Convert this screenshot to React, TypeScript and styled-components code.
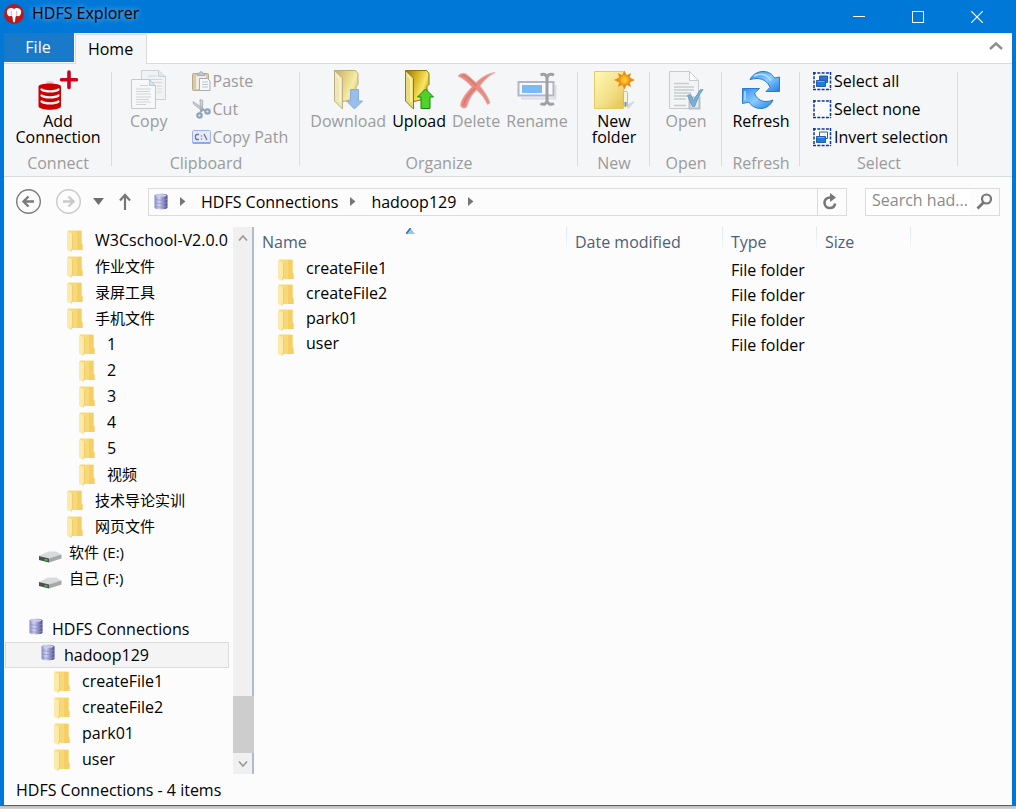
import React from "react";
import styled, { createGlobalStyle } from "styled-components";

const GlobalStyle = createGlobalStyle`
  *, *::before, *::after { box-sizing: border-box; }
  html, body { margin: 0; padding: 0; }
  body, button, input, table {
    font-family: "Open Sans", "Noto Sans CJK SC", sans-serif;
    font-size: 16px;
    line-height: 20px;
    color: #000;
  }
  button { background: none; border: 0; padding: 0; margin: 0; cursor: pointer; }
  button:disabled { cursor: default; }
  svg { display: block; flex: none; }
`;

const line = "#dadbdc";
const muted = "#9b9b9b";

const Desktop = styled.div`
  min-height: 100vh;
  display: flex;
  flex-direction: column;
  padding-bottom: 3px;
  background: linear-gradient(to top, #d4d4d4, #bcbcbc 3px, #bcbcbc);
`;

const Window = styled.div`
  flex: 1;
  display: flex;
  flex-direction: column;
  background: #fcfcfc;
  border: solid #0078d7;
  border-width: 0 4px 1px 4px;
`;

const TitleBar = styled.header`
  height: 33px;
  display: flex;
  align-items: center;
  gap: 8px;
  padding-bottom: 5px;
  background: #0078d7;
`;

const Title = styled.h1`
  flex: 1;
  margin: 0;
  padding-bottom: 2px;
  font-size: 16px;
  line-height: 20px;
  font-weight: 400;
  text-shadow: 0 0 6px #62aae8, 0 0 6px #62aae8;
`;

const WindowButtons = styled.div`
  display: flex;
  padding: 5px 6px 0 0;
`;

const WindowButton = styled.button`
  width: 59px;
  height: 28px;
  display: grid;
  place-items: center;
`;

const TabRow = styled.nav`
  height: 31px;
  display: flex;
  background: #fff;
  border-bottom: 1px solid ${line};
`;

const FileTab = styled.button`
  width: 70px;
  height: 29px;
  padding: 0 2px 2px 0;
  background: #1979ca;
  color: #fff;
`;

const HomeTab = styled.button`
  width: 72px;
  height: 30px;
  margin: 1px 0 0 1px;
  padding: 0 1px 2px 0;
  background: #f5f6f7;
  border: 1px solid ${line};
  border-bottom: 0;
`;

const CollapseButton = styled.button`
  margin-left: auto;
  padding: 0 9px 4px;
`;

const Ribbon = styled.section`
  height: 113px;
  display: flex;
  background: #f5f6f7;
  border-bottom: 1px solid ${line};
`;

const Group = styled.div<{ $width: number }>`
  width: ${(p) => p.$width}px;
  padding: 6px 0 0 1px;
`;

const GroupBody = styled.div<{ $start?: number }>`
  height: 83px;
  display: flex;
  align-items: flex-start;
  gap: 6px;
  justify-content: ${(p) => (p.$start ? "flex-start" : "center")};
  padding-left: ${(p) => p.$start ?? 0}px;
`;

const GroupLabel = styled.div`
  text-align: center;
  color: ${muted};
  line-height: 20px;
`;

const Separator = styled.div`
  width: 1px;
  margin: 8px 0 10px;
  background: ${line};
`;

const BigButton = styled.button`
  display: flex;
  flex-direction: column;
  align-items: center;
  gap: 3px;
  line-height: 16px;
  white-space: pre-line;
  &:disabled { color: ${muted}; }
`;

const SmallList = styled.div<{ $gap?: number }>`
  display: flex;
  flex-direction: column;
  gap: 8px;
  padding-top: 1px;
  margin-left: ${(p) => p.$gap ?? 0}px;
`;

const SmallButton = styled.button`
  display: flex;
  align-items: center;
  gap: 2px;
  white-space: nowrap;
  &:disabled { color: ${muted}; }
`;

const NavRow = styled.div`
  height: 49px;
  display: flex;
  align-items: center;
  padding: 0 12px 0 11px;
`;

const NavButton = styled.button<{ $width: number }>`
  width: ${(p) => p.$width}px;
  height: 27px;
  display: flex;
  align-items: center;
`;

const AddressBar = styled.div`
  flex: 1;
  height: 28px;
  display: flex;
  align-items: center;
  border: 1px solid ${line};
  padding-left: 5px;
`;

const Crumb = styled.a`
  color: #000;
  text-decoration: none;
  padding: 0 12px 0 15px;
`;

const ReloadButton = styled.button`
  width: 29px;
  height: 26px;
  margin-left: auto;
  padding-right: 4px;
  display: grid;
  place-items: center;
  border-left: 1px solid ${line};
`;

const SearchBox = styled.form`
  width: 135px;
  height: 28px;
  margin-left: 18px;
  display: flex;
  border: 1px solid ${line};
`;

const SearchInput = styled.input`
  flex: 1;
  min-width: 0;
  border: 0;
  outline: 0;
  padding: 0 0 4px 6px;
  background: #fff;
  &::placeholder { color: #8a8a8a; opacity: 1; }
`;

const SearchButton = styled.button`
  width: 29px;
  display: grid;
  place-items: center;
`;

const Main = styled.main`
  flex: 1;
  display: flex;
`;

const Sidebar = styled.aside`
  width: 250px;
  display: flex;
`;

const Tree = styled.ul`
  flex: 1;
  min-width: 0;
  margin: 0;
  padding: 1px 4px 0 1px;
  list-style: none;
`;

const TreeItem = styled.li<{ $spacer?: boolean }>`
  height: ${(p) => (p.$spacer ? 25 : 26)}px;
`;

const TreeLink = styled.a<{ $indent: number; $gap: number; $selected?: boolean }>`
  height: 26px;
  display: flex;
  align-items: center;
  gap: ${(p) => p.$gap}px;
  padding-left: ${(p) => p.$indent}px;
  color: #000;
  text-decoration: none;
  white-space: nowrap;
  background: ${(p) => (p.$selected ? "#f4f4f4" : "none")};
  box-shadow: ${(p) => (p.$selected ? `inset 0 0 0 1px ${line}` : "none")};
`;

const TreeIcon = styled.span<{ $kind: IconKind }>`
  padding-top: ${(p) => ({ folder: 2, drive: 8, db: 0 })[p.$kind]}px;
  padding-bottom: ${(p) => (p.$kind === "db" ? 5 : 0)}px;
`;

const TreeText = styled.span<{ $cjk: boolean }>`
  font-size: ${(p) => (p.$cjk ? 15 : 16)}px;
`;

const ScrollBar = styled.div`
  width: 21px;
  margin-top: 1px;
  display: flex;
  flex-direction: column;
  background: #f0f0f0;
  border-right: 2px solid #a9bdd3;
`;

const ScrollButton = styled.button`
  height: 21px;
  display: grid;
  place-items: center;
`;

const ScrollTrack = styled.div`
  flex: 1;
  display: flex;
  flex-direction: column;
  justify-content: flex-end;
`;

const ScrollThumb = styled.div`
  height: 57px;
  margin-right: -2px;
  background: #cdcdcd;
`;

const Listing = styled.section`
  flex: 1;
  min-width: 0;
`;

const FileTable = styled.table`
  width: 100%;
  table-layout: fixed;
  border-collapse: collapse;
`;

const Col = styled.col<{ $width?: number }>`
  width: ${(p) => (p.$width ? `${p.$width}px` : "auto")};
`;

const HeadCell = styled.th`
  height: 30px;
  padding: 2px 0 0 8px;
  text-align: left;
  font-weight: 400;
  color: #4c607a;
  background: linear-gradient(#d9e6f5, #fcfcfc) right 1px / 1px 26px no-repeat;
  &:last-child { background: none; }
`;

const SortHead = styled.div`
  display: flex;
  align-items: flex-start;
  gap: 99px;
`;

const SortMark = styled.span`
  height: 20px;
  margin-top: -4px;
`;

const Row = styled.tr`
  height: 25px;
`;

const NameCell = styled.td`
  padding: 0 0 0 24px;
`;

const NameLink = styled.a`
  display: flex;
  align-items: center;
  gap: 12px;
  height: 25px;
  padding-bottom: 1px;
  color: #000;
  text-decoration: none;
`;

const NameIcon = styled.span`
  padding-top: 4px;
`;

const Cell = styled.td`
  padding: 2px 0 0 8px;
`;

const StatusBar = styled.footer`
  height: 31px;
  display: flex;
  align-items: center;
  padding: 1px 12px 0;
`;

/* ---------- Icons ---------- */

const LogoIcon = () => (
  <svg width="20" height="20" viewBox="0 0 20 20">
    <circle cx="10" cy="10" r="10" fill="#b81a20" />
    <path d="M8.600 4.200C7 3.400 4.300 4.200 3.200 6.300c-.8 2 0 4.700 1.500 5.700 1 .6 2 .1 2.600-.4L8.500 13l.5 4.500 1 1V5z" fill="#fff" />
    <path d="M11.400 4.200c1.600-.8 4.300 0 5.400 2.100.8 2 0 4.700-1.500 5.700-1 .6-2 .1-2.600-.4L11.500 13l-.5 4.500-1 1V5z" fill="#fff" />
    <path d="M7.300 7v4M12.700 7v4" stroke="#e4abae" fill="none" />
  </svg>
);

const AddConnectionIcon = () => (
  <svg width="42" height="40" viewBox="0 0 42 40">
    <ellipse cx="13" cy="12.500" rx="4" ry="1.500" fill="#ecc" />
    <path d="M1.500 16.500C1.500 12.500 24 12.500 24 16.500v19.500c0 5-22.500 5-22.500 0z" fill="#c00" />
    <path d="M4.500 19.500c3.500 2.500 13.500 2.500 17 0M4.500 25.500c3.500 2.500 13.500 2.500 17 0M4.500 31.500c3.500 2.500 13.500 2.500 17 0" stroke="#f5f6f7" strokeWidth="2.200" fill="none" strokeLinecap="round" />
    <path d="M32 2v15.500M24.500 9.700h15" stroke="#d0021b" strokeWidth="3.600" strokeLinecap="round" />
  </svg>
);

const CopyIcon = () => (
  <svg width="36" height="40" viewBox="0 0 36 40">
    <path d="M10.500.5h17l7 6v23h-24z" fill="#f0f3f6" stroke="#ccd1d6" />
    <path d="M27.500.5v6h7" fill="#dbe7f2" stroke="#ccd1d6" />
    <path d="M17 6h9M14 9.500h17M14 12.500h17M26 16h5M26 19h5M26 22h5" stroke="#d3d7da" />
    <path d="M.5 9.500h18l6 6v23H.5z" fill="#f6f8fa" stroke="#c4c9ce" />
    <path d="M18.500 9.500v6h6z" fill="#d6e4f0" stroke="#c4c9ce" />
    <path d="M9 15.500h8M5 19h15M5 21.500h14M5 24h15M5 27h15M5 29.500h13M5 32h15M5 34.500h10" stroke="#d0d2d4" />
  </svg>
);

const PasteIcon = () => (
  <svg width="19" height="20" viewBox="0 0 19 20">
    <rect x=".5" y="2.500" width="16" height="17" rx="1" fill="#dac9a7" stroke="#b9aa8e" />
    <path d="M4 4h10v14H4z" fill="#f0ece4" />
    <path d="M5 4.500V2.500h2C7 .2 11 .2 11 2.500h2v2z" fill="#c1c6cc" stroke="#9fa5ab" strokeWidth=".8" />
    <path d="M7.500 7.500h8l2.500 2.500v9.500H7.500z" fill="#f4f8fb" stroke="#a5adb6" />
    <path d="M10 11h6M10 13.500h6M10 16h6" stroke="#bcc6cf" />
  </svg>
);

const CutIcon = () => (
  <svg width="19" height="20" viewBox="0 0 19 20">
    <path d="M8 .5l2.800 1-.3 9-2 2.200zM1 2.500l11.500 8-2 1.700L1.500 5z" fill="#c8cdd2" stroke="#a5abb1" strokeWidth=".8" />
    <circle cx="7.500" cy="16.500" r="2.200" fill="#e6ebf0" stroke="#8ca5be" strokeWidth="2.200" />
    <circle cx="15.500" cy="12.500" r="2.200" fill="#e6ebf0" stroke="#8ca5be" strokeWidth="2.200" />
    <path d="M8 14l2-3.500 3.500 1" stroke="#99a9b8" strokeWidth="2" fill="none" />
  </svg>
);

const CopyPathIcon = () => (
  <svg width="19" height="16" viewBox="0 0 19 16">
    <rect x=".5" y="1.500" width="18" height="13" rx="1" fill="#e4eafd" stroke="#9fb1f5" />
    <path d="M1 14h17" stroke="#8fa4f2" strokeWidth="2" />
    <path d="M7 5.500H4.500L3.500 6.500v3l1 1H7M9.500 6.500v1M9.500 9.500v1M12 5l3 6" stroke="#72757e" strokeWidth="1.300" fill="none" />
  </svg>
);

const FolderArrowIcon = ({ down }: { down?: boolean }) => {
  const id = down ? "folder-down" : "folder-up";
  return (
    <svg width="30" height="40" viewBox="0 0 30 40" opacity={down ? 0.55 : 1}>
      <defs>
        <linearGradient id={id} x1="0" y1="0" x2="1" y2=".5">
          <stop offset="0" stopColor="#8f7610" />
          <stop offset=".45" stopColor="#d6b421" />
          <stop offset=".8" stopColor="#f7e668" />
          <stop offset="1" stopColor="#d3b01c" />
        </linearGradient>
      </defs>
      <path d="M1.500.5h21l2.500 3v11l-2 2v12l-13 3z" fill={`url(#${id})`} stroke="#8d7408" />
      <path d="M1.500.5l8 7.500v31l-8-8z" fill="#eadb7c" stroke="#8d7a24" />
      <path d="M3.500 5l3.500 4v23" stroke="#fbf3b0" strokeWidth="1.500" fill="none" />
      {down ? (
        <path d="M17.500 19.500h8v11.500h4L21.500 39l-8-8h4z" fill="#4f8fe6" stroke="#3470c4" />
      ) : (
        <path d="M21.500 19L29.500 27h-3.500v11.500h-9V27h-3.500z" fill="#4fd32b" stroke="#18860f" />
      )}
    </svg>
  );
};

const DeleteIcon = () => (
  <svg width="39" height="40" viewBox="0 0 39 40">
    <path d="M1 6C4 2.500 8 2.500 11 5.500L19 12.500C24 8 30 3.500 38 2.500 31.500 6 26.500 10.500 23 16c4.500 5.500 8.500 11.500 10 17l-2.500 1.500C28 29 24 23.500 19.500 20 14.500 25 11.500 30 10 36.500 8 39 4 38.500 3.500 35c1-6.500 6-12.500 11.500-18C10 11.500 6 8.500 1 6z" fill="#e58c84" stroke="#efb2ac" />
    <path d="M5 5c5 1 10 6 14.500 11M6.500 35c2-7 7-13 12-17" stroke="#d9776e" strokeWidth="1.500" fill="none" />
  </svg>
);

const RenameIcon = () => (
  <svg width="40" height="40" viewBox="0 0 40 40">
    <path d="M4 28.500h35M38.500 15v13" stroke="#dcdde0" strokeWidth="2" />
    <rect x="1.500" y="12" width="35" height="13.500" fill="#f7f9fc" stroke="#b1b4cd" strokeWidth="2" />
    <rect x="5" y="15" width="20" height="8" fill="#7abaf7" />
    <path d="M23.500 5c4-2 6 0 6.500 3 .5-3 3-5 7-3M23.500 33.500c4 2 6 0 6.500-3 .5 3 3 5 7 3M30 8v23" stroke="#a0a0a0" strokeWidth="3" fill="none" />
  </svg>
);

const NewFolderIcon = () => (
  <svg width="42" height="40" viewBox="0 0 42 40">
    <defs>
      <linearGradient id="new-folder" x1="0" x2="1" y1="0" y2="1">
        <stop offset="0" stopColor="#fffab5" />
        <stop offset=".6" stopColor="#f2df86" />
        <stop offset="1" stopColor="#e3c24f" />
      </linearGradient>
      <radialGradient id="sun">
        <stop offset="0" stopColor="#ffd84a" />
        <stop offset="1" stopColor="#f59a0c" />
      </radialGradient>
    </defs>
    <path d="M34 38.500h2l5-6v-1.500l-6 3z" fill="#d8dade" />
    <path d="M1.500 1.500h29v37h-29z" fill="url(#new-folder)" stroke="#e4ca65" />
    <rect x="30.500" y="21.500" width="4" height="15" rx="1" fill="#f8f4d5" stroke="#d6bb55" />
    <path d="M32.500 32v4" stroke="#5d94cf" strokeWidth="2" />
    <path d="M31.500.5l2.200 4.800 4.300-2.300-1.200 4.600 5.200 2.400-5.200 2.400 1.200 4.600-4.300-2.300-2.200 4.800-2.200-4.800L25 17l1.200-4.600L21 10l5.200-2.400L25 3l4.300 2.300z" fill="#ee8c0d" />
    <circle cx="31.500" cy="10" r="5" fill="url(#sun)" />
  </svg>
);

const OpenIcon = () => (
  <svg width="36" height="40" viewBox="0 0 36 40">
    <path d="M1.500 1.500h20l9 9v28h-29z" fill="#f3f4f5" stroke="#c8cacc" />
    <path d="M21.500 1.500v9h9z" fill="#fff" stroke="#c8cacc" />
    <path d="M6 13.500h15M6 17h20M6 20h20M6 23h17M6 26h14M6 29h12M6 35.500h12" stroke="#c9cbcd" strokeWidth="1.300" />
    <path d="M21.500 27.500h10v11h-10z" fill="#e7ebee" stroke="#b7bfc5" strokeWidth="2" />
    <path d="M19.500 25.500l3-1 3 6L32 20l3-.5c-4 5-6 11-8.500 17h-2z" fill="#7eaed6" stroke="#689dc7" />
  </svg>
);

const RefreshIcon = () => (
  <svg width="40" height="40" viewBox="0 0 40 40">
    <defs>
      <linearGradient id="refresh" x1="0" x2="1" y1="0" y2="1">
        <stop offset="0" stopColor="#2f8cee" />
        <stop offset=".5" stopColor="#8accfd" />
        <stop offset="1" stopColor="#1f7fe6" />
      </linearGradient>
    </defs>
    <path d="M9 9.500C12 4 17 1.500 22 1.500c6 0 9.500 3 11.500 6.500L38.500 7v14.500H25l4-4C27 12 22 8.500 16 8.500c-2.500 0-5 .5-7 1z" fill="url(#refresh)" stroke="#2b78cf" />
    <path d="M32 30C29.500 35.500 25 38.500 20 38.500c-6 0-10-3-12-6.500L1.500 33.500V18.500h17L13.500 23c2 5.500 6 8.500 11.500 8.500 2.500 0 5-.5 7-1.500z" fill="url(#refresh)" stroke="#2b78cf" />
    <path d="M13 6c6-3.500 13-2 17 4.500M4 21v9" stroke="#b9e0ff" strokeWidth="1.500" fill="none" />
  </svg>
);

const SelectIcon = ({ kind }: { kind: "all" | "none" | "invert" }) => (
  <svg width="19" height="19" viewBox="0 0 19 19">
    <rect x="1" y="1" width="16.500" height="16.500" fill="#fafbfd" />
    <path d="M0 1h18M0 17.500h18" stroke="#0b3797" strokeWidth="1.500" strokeDasharray="3 1.300" />
    <path d="M1 0v18M17.500 0v18" stroke="#0b3797" strokeWidth="1.500" strokeDasharray="3 1.300" />
    {kind !== "none" && (
      <>
        <path d="M6.500 4h8v6.500h-8z" fill={kind === "all" ? "#2375cf" : "#fff"} stroke="#2a5ba8" />
        <path d="M3.500 8.500h9v6h-9z" fill="#1380e4" stroke="#2a5ba8" />
        <path d="M4.500 9.500h7" stroke="#5fb0f5" />
      </>
    )}
  </svg>
);

const ArrowCircle = ({ back }: { back?: boolean }) => {
  const color = back ? "#7b7b7b" : "#c9c9c9";
  return (
    <svg width="26" height="26" viewBox="0 0 26 26">
      <circle cx="13.500" cy="12.500" r="11.800" fill="none" stroke={color} strokeWidth="1.400" />
      <path d={back ? "M19 12.500H9M13.500 7.500l-5 5 5 5" : "M8 12.500h10M13.500 7.500l5 5-5 5"} fill="none" stroke={color} strokeWidth="2.400" />
    </svg>
  );
};

const DatabaseIcon = () => (
  <svg width="14" height="17" viewBox="0 0 14 17">
    <defs>
      <linearGradient id="db" x1="0" x2="1">
        <stop offset="0" stopColor="#8588c6" />
        <stop offset=".35" stopColor="#d4d6f3" />
        <stop offset="1" stopColor="#45468b" />
      </linearGradient>
    </defs>
    <path d="M.5 2.500C.5 0 13.500 0 13.500 2.500v12c0 2.500-13 2.500-13 0z" fill="url(#db)" />
    <ellipse cx="7" cy="2.500" rx="5.500" ry="1.300" fill="#c9cbea" />
    <path d="M1 6c2 1.500 10 1.500 12 0M1 9.500c2 1.500 10 1.500 12 0M1 13c2 1.500 10 1.500 12 0" stroke="#8e90cb" strokeWidth=".8" fill="none" />
  </svg>
);

const FolderIcon = () => (
  <svg width="16" height="22" viewBox="0 0 16 22">
    <path d="M1 .5h13.500v13l1 1v5.500H1z" fill="#f8d978" />
    <path d="M10 1h4.500v12.500l1 1V20H10z" fill="#f5cf66" />
    <path d="M0 1l3.500 1.500L5.500 4v14L4 21.500 0 20z" fill="#fde9a8" />
    <path d="M5.500 4v14L4 21.500" stroke="#efc964" strokeWidth=".8" fill="none" />
  </svg>
);

const DriveIcon = () => (
  <svg width="24" height="14" viewBox="0 0 24 14">
    <path d="M1 7L10 2.500h8.500L23.500 6l-12.500 4z" fill="#d9dadb" />
    <path d="M1 7l10 2.500v4L1 11z" fill="#4c4f50" />
    <path d="M11 9.500l12.500-4V9.500l-12.500 4z" fill="#a5a7a9" />
    <path d="M6.500 10.500l3 .8" stroke="#35d04a" strokeWidth="1.500" />
  </svg>
);

const CrumbArrow = () => (
  <svg width="6" height="9" viewBox="0 0 6 9"><path d="M0 0l5.500 4.500L0 9z" fill="#777" /></svg>
);

const Chevron = ({ up }: { up?: boolean }) => (
  <svg width="10" height="10" viewBox="0 0 10 10">
    <path d={up ? "M1 7.500L5 3l4 4.500" : "M1 2.500L5 7l4-4.500"} fill="none" stroke="#9a9a9a" strokeWidth="1.600" />
  </svg>
);

/* ---------- Data ---------- */

type IconKind = "folder" | "drive" | "db";

type Node = { label: string; icon: IconKind; indent: number; gap: number; selected?: boolean };

const folder = (label: string, indent: number): Node => ({ label, icon: "folder", indent, gap: 12 });

const tree: (Node | null)[] = [
  folder("W3Cschool-V2.0.0", 62),
  folder("作业文件", 62),
  folder("录屏工具", 62),
  folder("手机文件", 62),
  ...["1", "2", "3", "4", "5", "视频"].map((n) => folder(n, 74)),
  folder("技术导论实训", 62),
  folder("网页文件", 62),
  { label: "软件 (E:)", icon: "drive", indent: 33, gap: 7 },
  { label: "自己 (F:)", icon: "drive", indent: 33, gap: 7 },
  null,
  { label: "HDFS Connections", icon: "db", indent: 24, gap: 9 },
  { label: "hadoop129", icon: "db", indent: 36, gap: 9, selected: true },
  ...["createFile1", "createFile2", "park01", "user"].map((n) => folder(n, 49)),
];

const treeIcons = { folder: <FolderIcon />, drive: <DriveIcon />, db: <DatabaseIcon /> };

const isCjk = (text: string) => /[\u4e00-\u9fff]/.test(text);

const files = ["createFile1", "createFile2", "park01", "user"];

export default function App() {
  return (
    <>
      <GlobalStyle />
      <Desktop>
        <Window>
          <TitleBar>
            <LogoIcon />
            <Title>HDFS Explorer</Title>
            <WindowButtons>
              <WindowButton aria-label="Minimize">
                <svg width="12" height="12"><path d="M0 5.500h12" stroke="#fff" /></svg>
              </WindowButton>
              <WindowButton aria-label="Maximize">
                <svg width="12" height="12"><rect x=".5" y=".5" width="11" height="11" fill="none" stroke="#fff" /></svg>
              </WindowButton>
              <WindowButton aria-label="Close">
                <svg width="12" height="12"><path d="M0 0l12 12M12 0L0 12" stroke="#fff" strokeWidth="1.200" /></svg>
              </WindowButton>
            </WindowButtons>
          </TitleBar>

          <TabRow>
            <FileTab>File</FileTab>
            <HomeTab>Home</HomeTab>
            <CollapseButton aria-label="Collapse ribbon">
              <svg width="14" height="10" viewBox="0 0 14 10"><path d="M1 8l6-5.500L13 8" fill="none" stroke="#8f8f8f" strokeWidth="2.400" /></svg>
            </CollapseButton>
          </TabRow>

          <Ribbon>
            <Group $width={107}>
              <GroupBody><BigButton><AddConnectionIcon />{"Add\nConnection"}</BigButton></GroupBody>
              <GroupLabel>Connect</GroupLabel>
            </Group>
            <Separator />
            <Group $width={187}>
              <GroupBody $start={17}>
                <BigButton disabled><CopyIcon />Copy</BigButton>
                <SmallList $gap={18}>
                  <SmallButton disabled><PasteIcon />Paste</SmallButton>
                  <SmallButton disabled><CutIcon />Cut</SmallButton>
                  <SmallButton disabled><CopyPathIcon />Copy Path</SmallButton>
                </SmallList>
              </GroupBody>
              <GroupLabel>Clipboard</GroupLabel>
            </Group>
            <Separator />
            <Group $width={277}>
              <GroupBody>
                <BigButton disabled><FolderArrowIcon down />Download</BigButton>
                <BigButton><FolderArrowIcon />Upload</BigButton>
                <BigButton disabled><DeleteIcon />Delete</BigButton>
                <BigButton disabled><RenameIcon />Rename</BigButton>
              </GroupBody>
              <GroupLabel>Organize</GroupLabel>
            </Group>
            <Separator />
            <Group $width={71}>
              <GroupBody><BigButton><NewFolderIcon />{"New\nfolder"}</BigButton></GroupBody>
              <GroupLabel>New</GroupLabel>
            </Group>
            <Separator />
            <Group $width={71}>
              <GroupBody><BigButton disabled><OpenIcon />Open</BigButton></GroupBody>
              <GroupLabel>Open</GroupLabel>
            </Group>
            <Separator />
            <Group $width={77}>
              <GroupBody><BigButton><RefreshIcon />Refresh</BigButton></GroupBody>
              <GroupLabel>Refresh</GroupLabel>
            </Group>
            <Separator />
            <Group $width={157}>
              <GroupBody $start={12}>
                <SmallList>
                  <SmallButton><SelectIcon kind="all" />Select all</SmallButton>
                  <SmallButton><SelectIcon kind="none" />Select none</SmallButton>
                  <SmallButton><SelectIcon kind="invert" />Invert selection</SmallButton>
                </SmallList>
              </GroupBody>
              <GroupLabel>Select</GroupLabel>
            </Group>
            <Separator />
          </Ribbon>

          <NavRow>
            <NavButton $width={40} aria-label="Back"><ArrowCircle back /></NavButton>
            <NavButton $width={38} aria-label="Forward" disabled><ArrowCircle /></NavButton>
            <NavButton $width={26} aria-label="Recent locations">
              <svg width="11" height="7"><path d="M0 0h11L5.500 7z" fill="#6f6f6f" /></svg>
            </NavButton>
            <NavButton $width={29} aria-label="Up">
              <svg width="12" height="17" viewBox="0 0 12 17"><path d="M6 17V2M1 7.500L6 2l5 5.500" fill="none" stroke="#777" strokeWidth="2.200" /></svg>
            </NavButton>
            <AddressBar>
              <NavButton $width={26} aria-label="Root"><DatabaseIcon /></NavButton>
              <CrumbArrow />
              <Crumb href="#connections">HDFS Connections</Crumb>
              <CrumbArrow />
              <Crumb href="#hadoop129">hadoop129</Crumb>
              <CrumbArrow />
              <ReloadButton aria-label="Reload">
                <svg width="14" height="17" viewBox="0 0 14 17">
                  <path d="M8 4.500C4 4 1.500 6.500 1.500 9.700c0 3 2.400 5.300 5.300 5.300 2.700 0 4.900-1.800 5.300-4.500" fill="none" stroke="#777" strokeWidth="2.600" />
                  <path d="M7 0l6 4.500L7 9z" fill="#777" />
                </svg>
              </ReloadButton>
            </AddressBar>
            <SearchBox onSubmit={(e) => e.preventDefault()}>
              <SearchInput aria-label="Search hadoop129" placeholder="Search had..." />
              <SearchButton aria-label="Search">
                <svg width="17" height="17" viewBox="0 0 17 17">
                  <circle cx="10.500" cy="6" r="4.500" fill="none" stroke="#777" strokeWidth="2.200" />
                  <path d="M7.500 9.500l-6 6" stroke="#777" strokeWidth="2.800" />
                </svg>
              </SearchButton>
            </SearchBox>
          </NavRow>

          <Main>
            <Sidebar>
              <Tree>
                {tree.map((n, i) => (
                  <TreeItem key={i} $spacer={!n} aria-hidden={n ? undefined : true}>
                    {n && (
                      <TreeLink href="#open" $indent={n.indent} $gap={n.gap} $selected={n.selected}>
                        <TreeIcon $kind={n.icon}>{treeIcons[n.icon]}</TreeIcon>
                        <TreeText $cjk={isCjk(n.label)}>{n.label}</TreeText>
                      </TreeLink>
                    )}
                  </TreeItem>
                ))}
              </Tree>
              <ScrollBar>
                <ScrollButton aria-label="Scroll up"><Chevron up /></ScrollButton>
                <ScrollTrack><ScrollThumb /></ScrollTrack>
                <ScrollButton aria-label="Scroll down"><Chevron /></ScrollButton>
              </ScrollBar>
            </Sidebar>
            <Listing>
              <FileTable>
                <colgroup>
                  <Col $width={313} />
                  <Col $width={156} />
                  <Col $width={94} />
                  <Col $width={94} />
                  <Col />
                </colgroup>
                <thead>
                  <tr>
                    <HeadCell scope="col">
                      <SortHead>
                        Name
                        <SortMark><svg width="9" height="6"><path d="M0 6l4.500-6L9 6z" fill="#8cc8f0" /><path d="M0 6l4.500-6" stroke="#3c6f94" strokeWidth="1.500" /></svg></SortMark>
                      </SortHead>
                    </HeadCell>
                    <HeadCell scope="col">Date modified</HeadCell>
                    <HeadCell scope="col">Type</HeadCell>
                    <HeadCell scope="col">Size</HeadCell>
                    <HeadCell as="td" />
                  </tr>
                </thead>
                <tbody>
                  {files.map((f) => (
                    <Row key={f}>
                      <NameCell><NameLink href="#open"><NameIcon><FolderIcon /></NameIcon>{f}</NameLink></NameCell>
                      <Cell />
                      <Cell>File folder</Cell>
                      <Cell />
                      <Cell />
                    </Row>
                  ))}
                </tbody>
              </FileTable>
            </Listing>
          </Main>

          <StatusBar>HDFS Connections - 4 items</StatusBar>
        </Window>
      </Desktop>
    </>
  );
}
